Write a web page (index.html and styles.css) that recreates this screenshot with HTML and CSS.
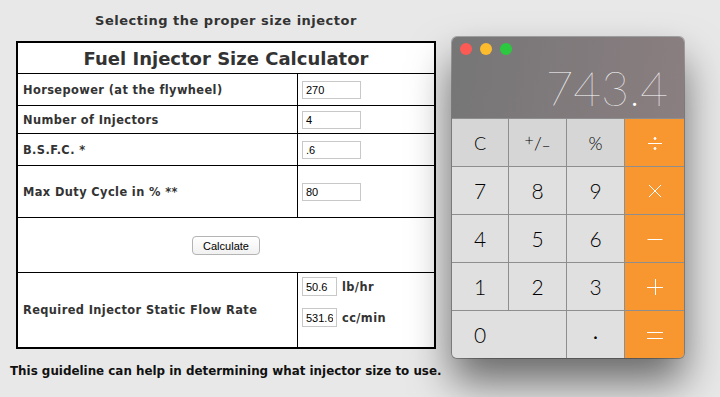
FILE: index.html
```html
<!DOCTYPE html>
<html lang="en">
<head>
    <meta charset="UTF-8">
    <title>Fuel Injector Size Calculator</title>
    <link rel="stylesheet" href="styles.css">
</head>
<body>
    <div class="page">
        <div class="calc-box">
            <h2>Selecting the proper size injector</h2>
            <table class="injector">
                <tr>
                    <th colspan="2" class="title">Fuel Injector Size Calculator</th>
                </tr>
                <tr class="row-a">
                    <td class="label">Horsepower (at the flywheel)</td>
                    <td class="field"><input type="text" id="hp" value="270"></td>
                </tr>
                <tr class="row-b">
                    <td class="label">Number of Injectors</td>
                    <td class="field"><input type="text" id="injectors" value="4"></td>
                </tr>
                <tr class="row-a">
                    <td class="label">B.S.F.C. *</td>
                    <td class="field"><input type="text" id="bsfc" value=".6"></td>
                </tr>
                <tr class="row-c">
                    <td class="label">Max Duty Cycle in % **</td>
                    <td class="field"><input type="text" id="duty" value="80"></td>
                </tr>
                <tr class="row-btn">
                    <td colspan="2" class="center"><button onclick="calculate()">Calculate</button></td>
                </tr>
                <tr class="row-result">
                    <td class="label">Required Injector Static Flow Rate</td>
                    <td class="field top">
                        <div class="out"><input type="text" id="lbhr" class="small" value="50.6"> <b>lb/hr</b></div>
                        <div class="out"><input type="text" id="ccmin" class="small" value="531.6"> <b>cc/min</b></div>
                    </td>
                </tr>
            </table>
        </div>
        <p class="note">This guideline can help in determining what injector size to use.</p>
    </div>

    <div class="window">
        <div class="display">
            <div class="lights">
                <span class="dot red"></span>
                <span class="dot yellow"></span>
                <span class="dot green"></span>
            </div>
            <div class="screen">743.4</div>
        </div>
        <div class="keys">
            <div class="key fn">C</div>
            <div class="key fn"><span class="sup">+</span>/<span class="sub">&minus;</span></div>
            <div class="key fn">%</div>
            <div class="key op">
                <svg width="16" height="16" viewBox="0 0 16 16"><path d="M1 8.5H15" /><circle cx="8" cy="3.5" r="1" /><circle cx="8" cy="13.5" r="1" /></svg>
            </div>
            <div class="key">7</div>
            <div class="key">8</div>
            <div class="key">9</div>
            <div class="key op">
                <svg width="16" height="16" viewBox="0 0 16 16"><path d="M2 2L14 14M14 2L2 14" /></svg>
            </div>
            <div class="key">4</div>
            <div class="key">5</div>
            <div class="key">6</div>
            <div class="key op">
                <svg width="16" height="16" viewBox="0 0 16 16"><path d="M0.5 8.5H15.5" /></svg>
            </div>
            <div class="key">1</div>
            <div class="key">2</div>
            <div class="key">3</div>
            <div class="key op">
                <svg width="16" height="16" viewBox="0 0 16 16"><path d="M0 8.5H16M8.5 0V16" /></svg>
            </div>
            <div class="key zero">0</div>
            <div class="key point">.</div>
            <div class="key op">
                <svg width="16" height="16" viewBox="0 0 16 16"><path d="M0 5.5H16M0 11.5H16" /></svg>
            </div>
        </div>
    </div>

    <script>
        function calculate() {
            var hp = parseFloat(document.getElementById('hp').value);
            var inj = parseFloat(document.getElementById('injectors').value);
            var bsfc = parseFloat(document.getElementById('bsfc').value);
            var duty = parseFloat(document.getElementById('duty').value);
            if (isNaN(hp) || isNaN(inj) || isNaN(bsfc) || isNaN(duty)) return;
            var lb = (hp * bsfc) / (inj * duty / 100);
            document.getElementById('lbhr').value = lb.toFixed(1);
            document.getElementById('ccmin').value = (lb * 10.5).toFixed(1);
        }
    </script>
</body>
</html>
```

FILE: styles.css
```css
body {
    margin: 0;
    background: #e8e8e8;
    font-family: "DejaVu Sans", Verdana, sans-serif;
    color: #333;
}

.page {
    padding: 13px 0 0 10px;
}

.calc-box {
    width: 420px;
    margin-left: 6px;
}

h2 {
    margin: 0 0 12px;
    font-size: 13px;
    line-height: 16px;
    letter-spacing: 0.5px;
    text-align: center;
    color: #333;
}

.injector {
    width: 420px;
    border-collapse: collapse;
    border: 2px solid #000;
    background: #fff;
}

.injector td, .injector th {
    border: 1px solid #000;
    padding: 0;
}

.title {
    height: 30px;
    font-size: 18px;
    color: #333;
    text-align: center;
}

.label {
    width: 274px;
    padding-left: 5px !important;
    font-size: 11.4px;
    letter-spacing: 0.4px;
    font-weight: bold;
    color: #333;
}

.field {
    padding-left: 4px !important;
}

.field.top {
    vertical-align: top;
    padding-top: 4px !important;
}

.row-a td { height: 31px; }
.row-b td { height: 27px; }
.row-c td { height: 51px; }
.row-btn td { height: 54px; }
.row-result td { height: 70px; }

.center {
    text-align: center;
}

input {
    width: 59px;
    height: 18px;
    box-sizing: border-box;
    border: 1px solid #c8c8c8;
    padding: 1px 3px;
    font-family: "Liberation Sans", Arial, sans-serif;
    font-size: 11px;
    color: #000;
    vertical-align: middle;
}

input.small {
    width: 35px;
    height: 19px;
}

.out {
    display: flex;
    align-items: center;
    gap: 5px;
    font-size: 11.4px;
    letter-spacing: 0.4px;
    color: #333;
}

.out + .out {
    margin-top: 12px;
}

button {
    width: 68px;
    height: 19px;
    margin-top: 1px;
    border: 1px solid #b4b4b4;
    border-radius: 4px;
    background: linear-gradient(#ffffff, #f1f1f1);
    font-family: "Liberation Sans", Arial, sans-serif;
    font-size: 11px;
    color: #000;
    cursor: pointer;
}

.note {
    margin: 14px 0 0;
    font-size: 11.9px;
    line-height: 16px;
    font-weight: bold;
    color: #111;
}

/* desktop calculator window */
.window {
    position: absolute;
    left: 452px;
    top: 37px;
    width: 232px;
    border-radius: 5px;
    overflow: hidden;
    box-shadow: 0 24px 42px rgba(0, 0, 0, 0.55), 0 0 0 1px rgba(0, 0, 0, 0.28);
    font-family: Lato, "Liberation Sans", sans-serif;
}

.display {
    height: 81px;
    background: linear-gradient(100deg, #767677, #8a7e80);
}

.lights {
    display: flex;
    gap: 8px;
    padding: 6px 0 0 8px;
}

.dot {
    width: 12px;
    height: 12px;
    border-radius: 50%;
}

.red { background: #fc5a55; }
.yellow { background: #fdbb2e; }
.green { background: #2bc840; }

.screen {
    text-align: right;
    padding-right: 16px;
    margin-top: 8px;
    font-size: 48px;
    line-height: 50px;
    font-weight: 200;
    color: #fff;
}

.keys {
    display: grid;
    grid-template-columns: 56px 57px 57px 59px;
    grid-auto-rows: 47px;
    background: #8e8e8e;
    gap: 1px;
    border-top: 1px solid #8e8e8e;
}

.key {
    display: flex;
    align-items: center;
    justify-content: center;
    background: #e0e0e0;
    font-size: 21px;
    font-weight: 300;
    color: #000;
}

.key.fn {
    background: #d6d6d6;
    font-size: 18px;
}

.sup {
    font-size: 16px;
    position: relative;
    top: -3px;
}

.sub {
    font-size: 15px;
    position: relative;
    top: 3px;
}

.key.op {
    background: #f8962f;
}

.key.op svg {
    stroke: #fff;
    stroke-width: 1;
    fill: #fff;
}

.key.op svg path {
    fill: none;
}

.key.point {
    padding-bottom: 8px;
    font-weight: 400;
}

.key.zero {
    grid-column: span 2;
    justify-content: flex-start;
    padding-left: 22px;
}
```
